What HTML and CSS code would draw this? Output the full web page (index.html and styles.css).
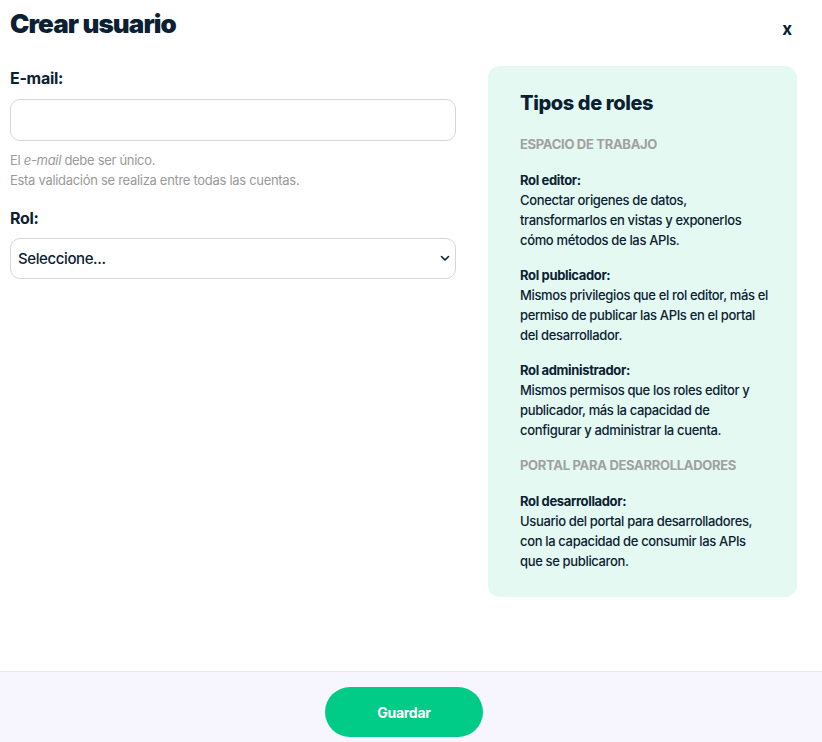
FILE: index.html
```html
<!DOCTYPE html>
<html lang="es">
<head>
    <meta charset="UTF-8">
    <meta name="viewport" content="width=device-width, initial-scale=1.0">
    <title>Crear usuario</title>
    <link rel="stylesheet" href="styles.css">
</head>
<body>
    <div class="modal">
        <div class="modal-header">
            <h1>Crear usuario</h1>
            <button class="close" type="button">x</button>
        </div>
        <div class="modal-body">
            <form class="user-form">
                <label for="email">E-mail:</label>
                <input type="email" id="email" class="field">
                <p class="help">El <em>e-mail</em> debe ser único.<br>Esta validación se realiza entre todas las cuentas.</p>
                <label for="role" class="label-role">Rol:</label>
                <div class="select-wrap">
                    <select id="role" class="field select">
                        <option>Seleccione...</option>
                        <option>Rol editor</option>
                        <option>Rol publicador</option>
                        <option>Rol administrador</option>
                        <option>Rol desarrollador</option>
                    </select>
                    <svg class="chevron" width="10" height="7" viewBox="0 0 10 7">
                        <path d="M1.5 1.5 L5 5 L8.5 1.5" fill="none" stroke="#0b2133" stroke-width="1.6" stroke-linecap="round" stroke-linejoin="round"/>
                    </svg>
                </div>
            </form>
            <aside class="roles">
                <h2>Tipos de roles</h2>
                <h3 class="section-title">Espacio de trabajo</h3>
                <p class="role"><strong>Rol editor:</strong><br>Conectar origenes de datos, transformarlos en vistas y exponerlos cómo métodos de las APIs.</p>
                <p class="role"><strong>Rol publicador:</strong><br>Mismos privilegios que el rol editor, más el permiso de publicar las APIs en el portal del desarrollador.</p>
                <p class="role"><strong>Rol administrador:</strong><br>Mismos permisos que los roles editor y publicador, más la capacidad de configurar y administrar la cuenta.</p>
                <h3 class="section-title">Portal para desarrolladores</h3>
                <p class="role last"><strong>Rol desarrollador:</strong><br>Usuario del portal para desarrolladores, con la capacidad de consumir las APIs que se publicaron.</p>
            </aside>
        </div>
        <div class="modal-footer">
            <button class="save" type="button">Guardar</button>
        </div>
    </div>
</body>
</html>
```

FILE: styles.css
```css
body {
    font-family: 'Inter', 'Liberation Sans', sans-serif;
    color: #0b2133;
    background: #ffffff;
    margin: 0;
}
.modal {
    display: flex;
    flex-direction: column;
    min-height: 100vh;
}
.modal-header {
    display: flex;
    justify-content: space-between;
    align-items: flex-start;
    padding: 8px 30px 0 10px;
}
h1 {
    margin: 0;
    font-size: 26px;
    line-height: 31px;
    font-weight: 900;
    letter-spacing: -0.9px;
}
.close {
    border: none;
    background: none;
    padding: 0;
    margin-top: 11px;
    font-family: inherit;
    font-size: 17px;
    line-height: 20px;
    font-weight: 700;
    color: #0b2133;
    cursor: pointer;
}
.modal-body {
    display: flex;
    gap: 32px;
    padding: 27px 25px 0 10px;
}
.user-form {
    width: 446px;
    padding-top: 2px;
}
label {
    display: block;
    font-size: 16px;
    line-height: 20px;
    font-weight: 700;
    letter-spacing: -0.3px;
    margin-bottom: 11px;
}
.label-role {
    margin-top: 18px;
    margin-bottom: 10px;
}
.field {
    display: block;
    box-sizing: border-box;
    width: 100%;
    height: 42px;
    border: 1px solid #d6d6d6;
    border-radius: 10px;
    background: #ffffff;
    font-family: inherit;
    font-size: 15px;
    color: #0b2133;
    padding: 0 8px;
}
.help {
    margin: 9px 0 0;
    font-size: 13px;
    line-height: 20px;
    color: #9a9a9a;
    letter-spacing: -0.3px;
}
.select-wrap {
    position: relative;
}
.select {
    appearance: none;
    -webkit-appearance: none;
    height: 41px;
    padding-left: 7px;
    font-weight: 500;
    letter-spacing: -0.4px;
}
.chevron {
    position: absolute;
    right: 6px;
    top: 17px;
    pointer-events: none;
}
.roles {
    width: 309px;
    box-sizing: border-box;
    background: #e4f9f1;
    border-radius: 12px;
    padding: 25px 26px 26px 32px;
}
h2 {
    margin: 0 0 19px;
    font-size: 20px;
    line-height: 24px;
    font-weight: 800;
    letter-spacing: -0.4px;
}
.section-title {
    margin: 0 0 16px;
    font-size: 13px;
    line-height: 20px;
    font-weight: 700;
    text-transform: uppercase;
    color: #a0a0a0;
    letter-spacing: -0.3px;
}
.role {
    margin: 0 0 15px;
    font-size: 13px;
    line-height: 20px;
    font-weight: 500;
    letter-spacing: -0.35px;
}
.role strong {
    font-weight: 700;
}
.role.last {
    margin-bottom: 0;
}
.modal-footer {
    margin-top: auto;
    height: 71px;
    box-sizing: border-box;
    border-top: 1px solid #e8e5f6;
    background: #f7f5fe;
    display: flex;
    justify-content: center;
    align-items: flex-start;
    padding: 15px 14px 0 0;
}
.save {
    width: 158px;
    height: 50px;
    border: none;
    border-radius: 25px;
    background: #00cc87;
    color: #ffffff;
    font-family: inherit;
    font-size: 14px;
    font-weight: 700;
    letter-spacing: -0.3px;
    cursor: pointer;
}
```
